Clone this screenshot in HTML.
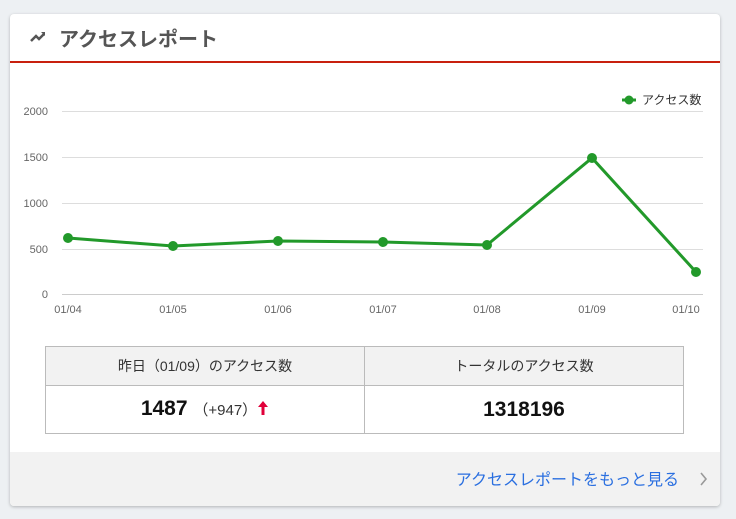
<!DOCTYPE html>
<html><head><meta charset="utf-8"><style>
body{margin:0;width:736px;height:519px;background:#edf0f3;font-family:"Liberation Sans","Noto Sans CJK JP",sans-serif;position:relative;overflow:hidden}
.card{position:absolute;left:10px;top:14px;width:710px;height:492px;background:#fff;border-radius:4px;box-shadow:0 1px 3px rgba(0,0,0,.25);overflow:hidden}
.hd{height:47px;border-bottom:2px solid #c8200e;position:relative}
.hd span{position:absolute;left:49px;top:9px;font-size:20px;font-weight:bold;color:#555}
table{position:absolute;width:639px;border-collapse:collapse;table-layout:fixed}
td{border:1px solid #bbb;text-align:center;width:50%;padding:0}
.th td{background:#f2f2f2;height:38px;font-size:14px;color:#333;line-height:38px}
.tv td{height:45px;font-size:21px;font-weight:bold;color:#111;line-height:45px}
.ft{position:absolute;left:0;top:438px;width:710px;height:54px;background:#f2f2f2}
.ft a{position:absolute;right:41px;top:14px;font-size:16px;color:#2a6fe0;text-decoration:none}
</style></head><body>
<div class="card">
<div class="hd">
<svg style="position:absolute;left:20px;top:17px" width="16" height="12" viewBox="0 0 16 12"><path d="M1 10 L6 5 L9 8 L14 3" stroke="#555" stroke-width="2.5" fill="none"/><path d="M11 1 L15 1 L15 5Z" fill="#555"/></svg>
<span>アクセスレポート</span></div>
<div class="ft"><a>アクセスレポートをもっと見る</a>
<svg style="position:absolute;right:12px;top:20px" width="8" height="14" viewBox="0 0 8 14"><path d="M1 1 L6 7 L1 13" stroke="#999" stroke-width="1.6" fill="none"/></svg></div>
</div>
<svg style="position:absolute;left:0;top:0" width="736" height="330">
<g stroke="#ddd" stroke-width="1">
<line x1="62" y1="111.5" x2="703" y2="111.5"/><line x1="62" y1="157.5" x2="703" y2="157.5"/><line x1="62" y1="203.5" x2="703" y2="203.5"/><line x1="62" y1="249.5" x2="703" y2="249.5"/><line x1="62" y1="294.5" x2="703" y2="294.5" stroke="#ccc"/>
</g>
<g font-size="11" fill="#666" font-family="Liberation Sans,sans-serif">
<text x="48" y="115" text-anchor="end">2000</text><text x="48" y="161" text-anchor="end">1500</text><text x="48" y="207" text-anchor="end">1000</text><text x="48" y="253" text-anchor="end">500</text><text x="48" y="298" text-anchor="end">0</text>
<g text-anchor="middle"><text x="68" y="313">01/04</text><text x="173" y="313">01/05</text><text x="278" y="313">01/06</text><text x="383" y="313">01/07</text><text x="487" y="313">01/08</text><text x="592" y="313">01/09</text><text x="686" y="313">01/10</text></g>
</g>
<polyline points="68,238 173,246 278,241 383,242 487,245 592,158 696,272" fill="none" stroke="#22992a" stroke-width="3"/>
<g fill="#22992a"><circle cx="68" cy="238" r="5"/><circle cx="173" cy="246" r="5"/><circle cx="278" cy="241" r="5"/><circle cx="383" cy="242" r="5"/><circle cx="487" cy="245" r="5"/><circle cx="592" cy="158" r="5"/><circle cx="696" cy="272" r="5"/>
<line x1="622" y1="100" x2="636" y2="100" stroke="#22992a" stroke-width="3"/><circle cx="629" cy="100" r="4.5"/></g>
<text x="642" y="104" font-size="12" fill="#333" font-family="Liberation Sans,Noto Sans CJK JP,sans-serif">アクセス数</text>
</svg>
<table style="left:45px;top:346px">
<tr class="th"><td>昨日（01/09）のアクセス数</td><td>トータルのアクセス数</td></tr>
<tr class="tv"><td>1487 <span style="font-size:15px;font-weight:normal;color:#333">（+947）</span><svg width="12" height="16" viewBox="0 0 12 16" style="vertical-align:-1px"><path d="M6 1 L11 7 L7.5 7 L7.5 15 L4.5 15 L4.5 7 L1 7Z" fill="#e0003a"/></svg></td><td>1318196</td></tr>
</table>
</body></html>
